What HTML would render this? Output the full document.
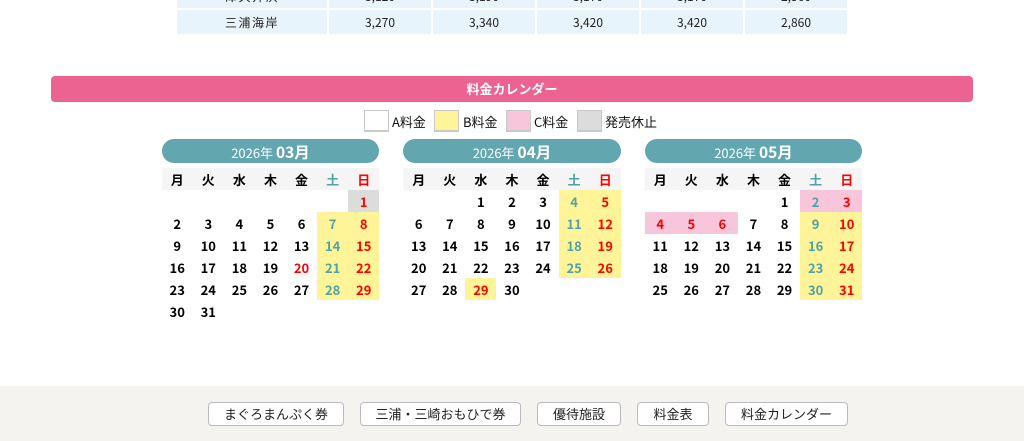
<!DOCTYPE html>
<html lang="ja"><head><meta charset="utf-8"><title>料金カレンダー</title>
<style>
html,body{margin:0;padding:0;background:#fff}
body{position:relative;width:1024px;height:441px;overflow:hidden;color:#222}
body,.j{font-family:"Noto Sans CJK JP","Liberation Sans",sans-serif}
.tc{position:absolute;background:#e8f4fb;text-align:center;font-size:12px;color:#222;line-height:26px;height:24px;overflow:hidden}
.bar{position:absolute;left:51px;top:76px;width:922px;height:26px;background:#ec6290;border-radius:4px;color:#fff;font-weight:700;font-size:13px;line-height:26px;text-align:center}
.sw{position:absolute;top:110px;width:23px;height:19px;border:1px solid #c9c9c9;border-bottom-width:2px;border-left-width:1px}
.lt{position:absolute;top:111px;font-size:13px;line-height:22px;color:#111;white-space:nowrap}
.cal{position:absolute;top:139px;width:217.6px}
.cap{height:24px;background:#62a6b0;border-radius:12px;color:#fff;text-align:center;font-size:13px;line-height:27px;margin-bottom:5px}
.cap b{font-size:15.5px}
table{border-collapse:collapse;table-layout:fixed;width:217.6px}
th,td{padding:2px 0 0;height:20px;font-size:13px;font-weight:700;text-align:center;line-height:20px;color:#000}
th{background:#f5f5f5}
th.s,td.s{color:#4fa3a5}th.u,td.u{color:#f00}
.y{background:#fff497}.p{background:#f7c6db}.g{background:#dcdcdc}
.foot{position:absolute;left:0;top:386px;width:1024px;height:55px;background:#f4f3ef}
.btn{position:absolute;top:402px;height:22px;background:#fff;border:1px solid #bbb;border-radius:4px;text-align:center;font-size:13px;line-height:22px;color:#222;white-space:nowrap}
</style></head><body>
<div class="tc" style="left:177px;top:-16px;width:150px;letter-spacing:1.5px">津久井浜</div>
<div class="tc" style="left:329px;top:-16px;width:102px">3,120</div>
<div class="tc" style="left:433px;top:-16px;width:102px">3,190</div>
<div class="tc" style="left:537px;top:-16px;width:102px">3,170</div>
<div class="tc" style="left:641px;top:-16px;width:102px">3,170</div>
<div class="tc" style="left:745px;top:-16px;width:102px">2,560</div>
<div class="tc" style="left:177px;top:10px;width:150px;letter-spacing:1.5px">三浦海岸</div>
<div class="tc" style="left:329px;top:10px;width:102px">3,270</div>
<div class="tc" style="left:433px;top:10px;width:102px">3,340</div>
<div class="tc" style="left:537px;top:10px;width:102px">3,420</div>
<div class="tc" style="left:641px;top:10px;width:102px">3,420</div>
<div class="tc" style="left:745px;top:10px;width:102px">2,860</div>

<div class="bar">料金カレンダー</div>

<div class="sw" style="left:364px;background:#fff"></div><div class="lt" style="left:392px">A料金</div>
<div class="sw" style="left:434px;background:#fff497"></div><div class="lt" style="left:463px">B料金</div>
<div class="sw" style="left:506px;background:#f7c6db"></div><div class="lt" style="left:534px">C料金</div>
<div class="sw" style="left:577px;background:#dcdcdc"></div><div class="lt" style="left:605px">発売休止</div>

<div class="cal" style="left:161.7px">
<div class="cap">2026年 <b>03月</b></div>
<table><tr><th>月</th><th>火</th><th>水</th><th>木</th><th>金</th><th class="s">土</th><th class="u">日</th></tr>
<tr><td></td><td></td><td></td><td></td><td></td><td></td><td class="u g">1</td></tr>
<tr><td>2</td><td>3</td><td>4</td><td>5</td><td>6</td><td class="s y">7</td><td class="u y">8</td></tr>
<tr><td>9</td><td>10</td><td>11</td><td>12</td><td>13</td><td class="s y">14</td><td class="u y">15</td></tr>
<tr><td>16</td><td>17</td><td>18</td><td>19</td><td class="u">20</td><td class="s y">21</td><td class="u y">22</td></tr>
<tr><td>23</td><td>24</td><td>25</td><td>26</td><td>27</td><td class="s y">28</td><td class="u y">29</td></tr>
<tr><td>30</td><td>31</td><td></td><td></td><td></td><td></td><td></td></tr></table>
</div>

<div class="cal" style="left:403.2px">
<div class="cap">2026年 <b>04月</b></div>
<table><tr><th>月</th><th>火</th><th>水</th><th>木</th><th>金</th><th class="s">土</th><th class="u">日</th></tr>
<tr><td></td><td></td><td>1</td><td>2</td><td>3</td><td class="s y">4</td><td class="u y">5</td></tr>
<tr><td>6</td><td>7</td><td>8</td><td>9</td><td>10</td><td class="s y">11</td><td class="u y">12</td></tr>
<tr><td>13</td><td>14</td><td>15</td><td>16</td><td>17</td><td class="s y">18</td><td class="u y">19</td></tr>
<tr><td>20</td><td>21</td><td>22</td><td>23</td><td>24</td><td class="s y">25</td><td class="u y">26</td></tr>
<tr><td>27</td><td>28</td><td class="u y">29</td><td>30</td><td></td><td></td><td></td></tr></table>
</div>

<div class="cal" style="left:644.7px">
<div class="cap">2026年 <b>05月</b></div>
<table><tr><th>月</th><th>火</th><th>水</th><th>木</th><th>金</th><th class="s">土</th><th class="u">日</th></tr>
<tr><td></td><td></td><td></td><td></td><td>1</td><td class="s p">2</td><td class="u p">3</td></tr>
<tr><td class="u p">4</td><td class="u p">5</td><td class="u p">6</td><td>7</td><td>8</td><td class="s y">9</td><td class="u y">10</td></tr>
<tr><td>11</td><td>12</td><td>13</td><td>14</td><td>15</td><td class="s y">16</td><td class="u y">17</td></tr>
<tr><td>18</td><td>19</td><td>20</td><td>21</td><td>22</td><td class="s y">23</td><td class="u y">24</td></tr>
<tr><td>25</td><td>26</td><td>27</td><td>28</td><td>29</td><td class="s y">30</td><td class="u y">31</td></tr></table>
</div>

<div class="foot"></div>
<div class="btn" style="left:208px;width:134px">まぐろまんぷく券</div>
<div class="btn" style="left:360px;width:159px">三浦・三崎おもひで券</div>
<div class="btn" style="left:537px;width:82px">優待施設</div>
<div class="btn" style="left:637px;width:70px">料金表</div>
<div class="btn" style="left:725px;width:121px">料金カレンダー</div>
</body></html>
